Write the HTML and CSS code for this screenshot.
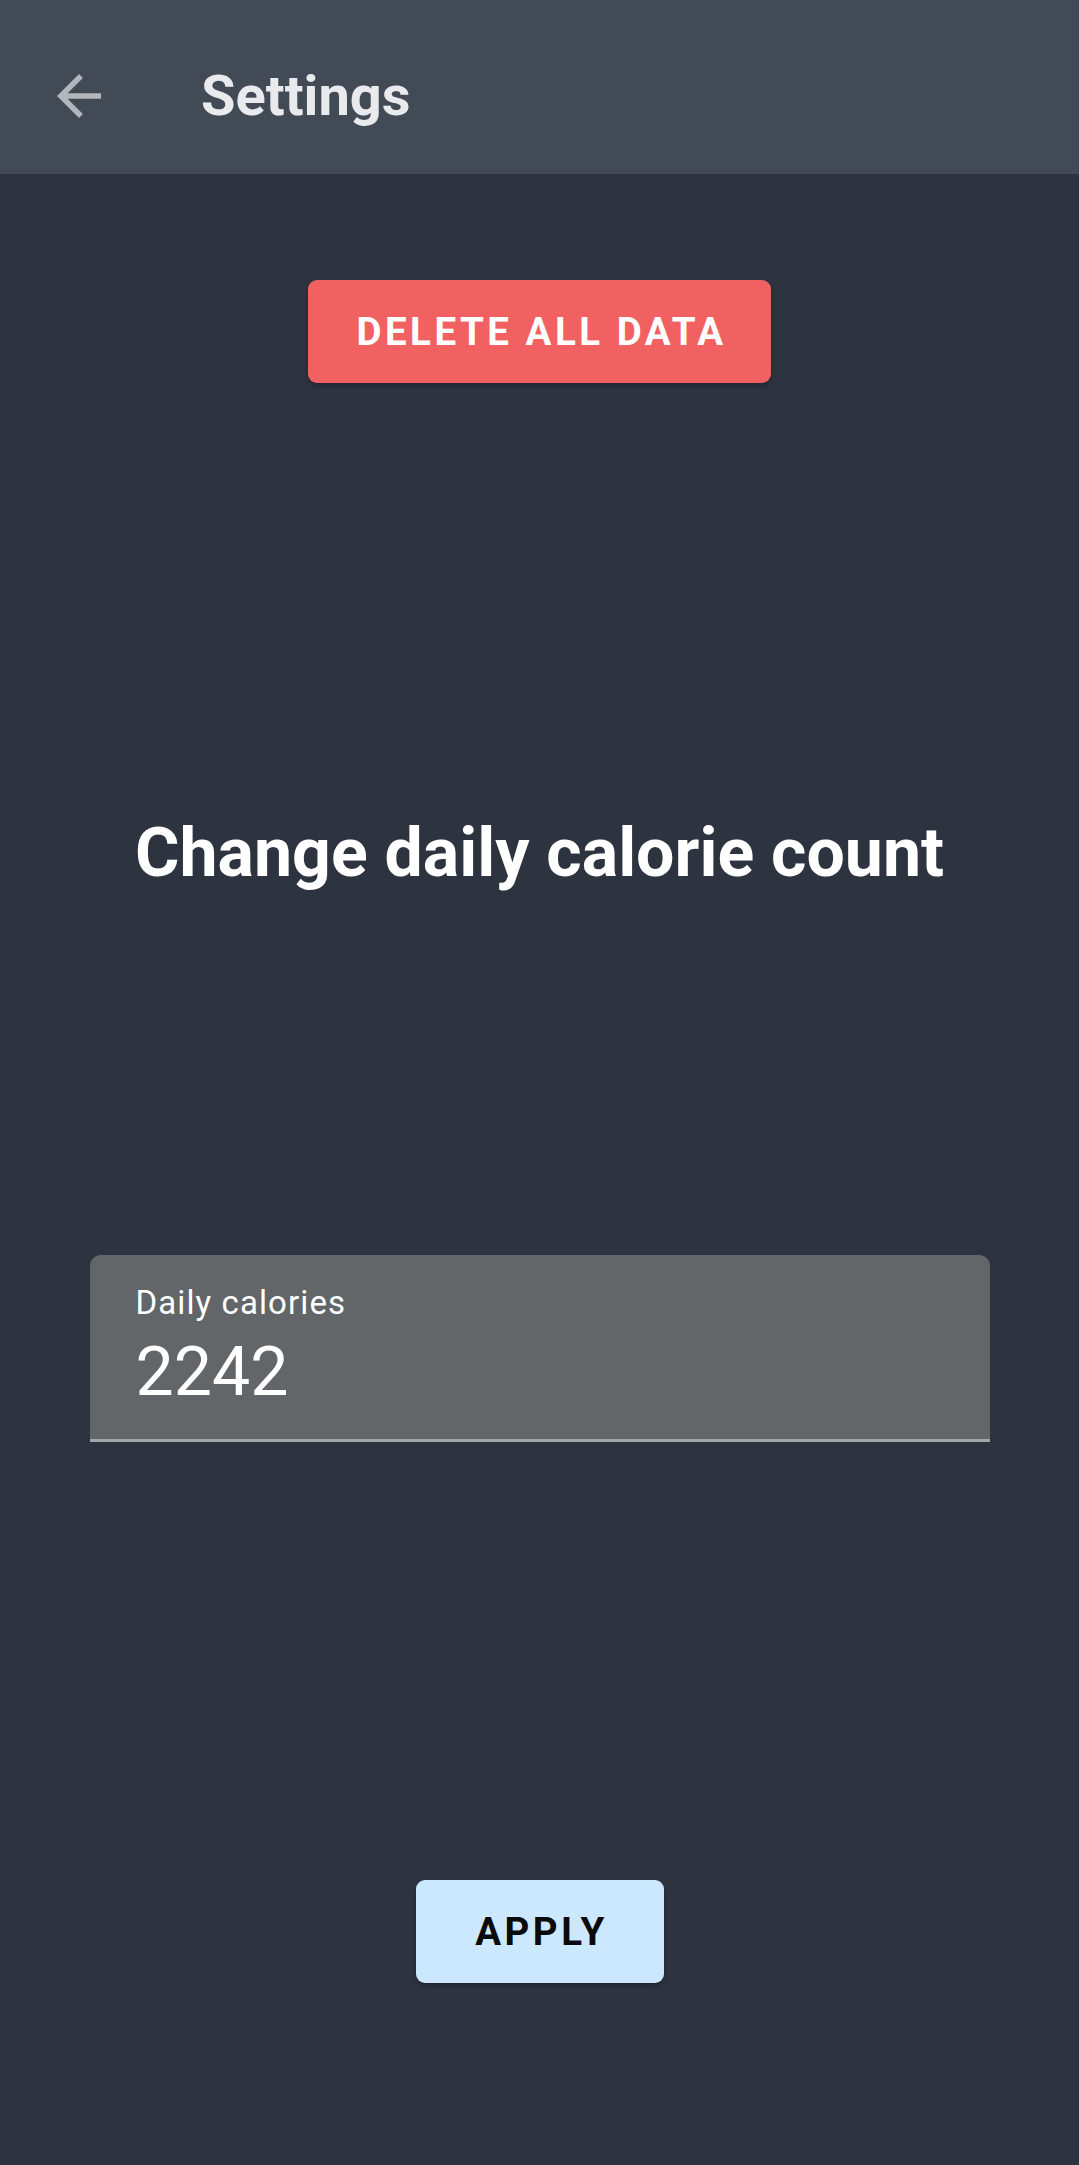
FILE: index.html
```html
<!DOCTYPE html>
<html>
<head>
<meta charset="utf-8">
<link rel="stylesheet" href="styles.css">
</head>
<body>
<header class="appbar">
  <div class="nav">
    <svg class="back" viewBox="0 0 24 24" width="66" height="66"><path d="M20 11H7.83l5.59-5.59L12 4l-8 8 8 8 1.41-1.41L7.83 13H20v-2z" fill="currentColor"/></svg>
  </div>
  <h1 class="title">Settings</h1>
</header>
<main class="content">
  <button class="btn btn-delete">DELETE ALL DATA</button>
  <h2 class="heading">Change daily calorie count</h2>
  <div class="field">
    <div class="field-label">Daily calories</div>
    <div class="field-value">2242</div>
  </div>
  <button class="btn btn-apply">APPLY</button>
</main>
</body>
</html>
```
FILE: styles.css
```css
html, body {
  margin: 0;
  padding: 0;
}
body {
  background: #2e3340;
  font-family: Roboto, "Noto Sans", sans-serif;
  height: 2165px;
  overflow: hidden;
}
.appbar {
  height: 174px;
  box-sizing: border-box;
  padding-top: 18px;
  background: #424b55;
  display: flex;
  align-items: center;
}
.nav {
  width: 154px;
  margin-left: 2px;
  display: flex;
  justify-content: center;
  align-items: center;
}
.back {
  color: #b3b7bc;
  display: block;
}
.title {
  margin: 0 0 0 45px;
  font-size: 56px;
  font-weight: 700;
  color: #e8eaed;
  line-height: 64px;
}
.content {
  display: flex;
  flex-direction: column;
  align-items: center;
  padding-top: 106px;
}
.btn {
  border: none;
  height: 103px;
  border-radius: 9px;
  font-family: Roboto, "Noto Sans", sans-serif;
  font-size: 38.5px;
  font-weight: 700;
  letter-spacing: 3.5px;
  box-shadow: 0 3px 4px rgba(0,0,0,0.25);
  padding: 0 0 0 4px;
}
.btn-delete {
  width: 463px;
  background: #f26161;
  color: #ffffff;
}
.heading {
  margin: 432px 0 0;
  font-size: 68px;
  line-height: 77px;
  font-weight: 700;
  color: #ffffff;
}
.field {
  margin-top: 363px;
  width: 900px;
  box-sizing: border-box;
  background: #636669;
  border-radius: 11px 11px 0 0;
  border-bottom: 3px solid #a3a6aa;
  padding: 28px 44px 28px 46px;
}
.field-label {
  font-size: 33px;
  line-height: 39px;
  letter-spacing: 1.1px;
  color: #ffffff;
}
.field-value {
  margin-top: 12px;
  font-size: 68px;
  line-height: 77px;
  color: #ffffff;
}
.btn-apply {
  margin-top: 438px;
  width: 248px;
  background: #cce8fe;
  color: #0a0a0a;
}
```
